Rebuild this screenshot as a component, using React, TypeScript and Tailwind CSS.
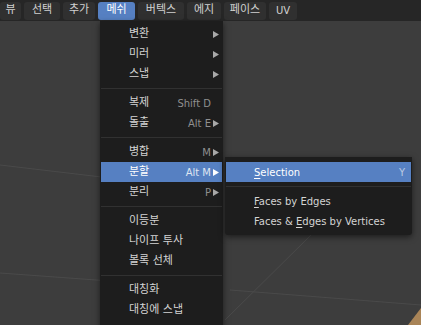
import React from "react";

type Item =
  | { kind: "item"; label: string; shortcut?: string; arrow?: boolean; active?: boolean }
  | { kind: "sep" };

const menuItems: Item[] = [
  { kind: "item", label: "변환", arrow: true },
  { kind: "item", label: "미러", arrow: true },
  { kind: "item", label: "스냅", arrow: true },
  { kind: "sep" },
  { kind: "item", label: "복제", shortcut: "Shift D" },
  { kind: "item", label: "돌출", shortcut: "Alt E", arrow: true },
  { kind: "sep" },
  { kind: "item", label: "병합", shortcut: "M", arrow: true },
  { kind: "item", label: "분할", shortcut: "Alt M", arrow: true, active: true },
  { kind: "item", label: "분리", shortcut: "P", arrow: true },
  { kind: "sep" },
  { kind: "item", label: "이등분" },
  { kind: "item", label: "나이프 투사" },
  { kind: "item", label: "볼록 선체" },
  { kind: "sep" },
  { kind: "item", label: "대칭화" },
  { kind: "item", label: "대칭에 스냅" },
];

const headerTabs = [
  { label: "뷰", w: "w-[21px]" },
  { label: "선택", w: "w-[36px]" },
  { label: "추가", w: "w-[32px]" },
  { label: "메쉬", w: "w-[37px]", active: true },
  { label: "버텍스", w: "w-[46px]" },
  { label: "에지", w: "w-[34px]" },
  { label: "페이스", w: "w-[42px]" },
  { label: "UV", w: "w-[28px]" },
];

function Arrow({ light }: { light?: boolean }) {
  return (
    <svg width="6" height="7" viewBox="0 0 6 7" className={light ? "text-white" : "text-[#a8a8a8]"}>
      <polygon points="0,0 6,3.5 0,7" fill="currentColor" />
    </svg>
  );
}

export default function App() {
  return (
    <div className="relative h-[325px] w-[421px] overflow-hidden bg-[#3d3d3d] font-['DejaVu_Sans','Noto_Sans_CJK_KR',sans-serif] text-[11px]">
      {/* viewport grid */}
      <svg width="421" height="325" className="absolute inset-0">
        <g stroke="#4a4a4a" strokeWidth="1" fill="none">
          <line x1="0" y1="165" x2="110" y2="178" />
          <line x1="0" y1="273" x2="110" y2="281" />
          <line x1="230" y1="290" x2="421" y2="305" />
          <line x1="312" y1="234" x2="225" y2="320" />
        </g>
        <polygon points="421,308 408,325 421,325" fill="#a98457" />
      </svg>

      {/* header */}
      <div className="relative flex h-[21px] items-center gap-[3px] bg-[#262626]">
        {headerTabs.map((t) => (
          <div
            key={t.label}
            className={`flex h-[18px] items-center justify-center rounded-[3px] ${t.w} ${
              t.active ? "bg-[#5680c2] text-white" : "bg-[#303030] text-[#d0d0d0]"
            } ${t.label === "UV" ? "text-[10px]" : ""}`}
          >
            {t.label}
          </div>
        ))}
      </div>

      {/* mesh menu */}
      <div className="absolute left-[100px] top-[21px] w-[123px] bg-[#1d1d1d] px-px pb-2 pt-[3px] shadow-[0_2px_6px_rgba(0,0,0,0.55)]">
        {menuItems.map((it, i) =>
          it.kind === "sep" ? (
            <div key={i} className="flex h-[9px] items-center">
              <div className="h-px w-full bg-[#313131]" />
            </div>
          ) : (
            <div
              key={i}
              className={`flex h-5 items-center pl-[28px] pr-[3px] ${
                it.active ? "bg-[#5680c2] text-white" : "text-[#d4d4d4]"
              }`}
            >
              <span className="flex-1 whitespace-nowrap">{it.label}</span>
              {it.shortcut && (
                <span className={`text-[10px] ${it.active ? "text-[#dfe6f2]" : "text-[#8f8f8f]"}`}>
                  {it.shortcut}
                </span>
              )}
              <span className="flex w-[8px] justify-end">{it.arrow && <Arrow light={it.active} />}</span>
            </div>
          )
        )}
      </div>

      {/* split submenu */}
      <div className="absolute left-[225px] top-[157px] w-[187px] rounded-b-[3px] bg-[#1d1d1d] px-px pb-1 pt-[5px] text-[10px] shadow-[0_2px_6px_rgba(0,0,0,0.55)]">
        <div className="flex h-5 items-center bg-[#5680c2] pl-[28px] pr-[6px] text-white">
          <span className="flex-1">
            <span className="underline underline-offset-2">S</span>election
          </span>
          <span className="text-[#b9c9e3]">Y</span>
        </div>
        <div className="flex h-[9px] items-center">
          <div className="h-px w-full bg-[#313131]" />
        </div>
        <div className="flex h-5 items-center pl-[28px] text-[#d4d4d4]">
          <span>
            <span className="underline underline-offset-2">F</span>aces by Edges
          </span>
        </div>
        <div className="flex h-5 items-center pl-[28px] text-[#d4d4d4]">
          <span>
            Faces &amp; <span className="underline underline-offset-2">E</span>dges by Vertices
          </span>
        </div>
      </div>
    </div>
  );
}
